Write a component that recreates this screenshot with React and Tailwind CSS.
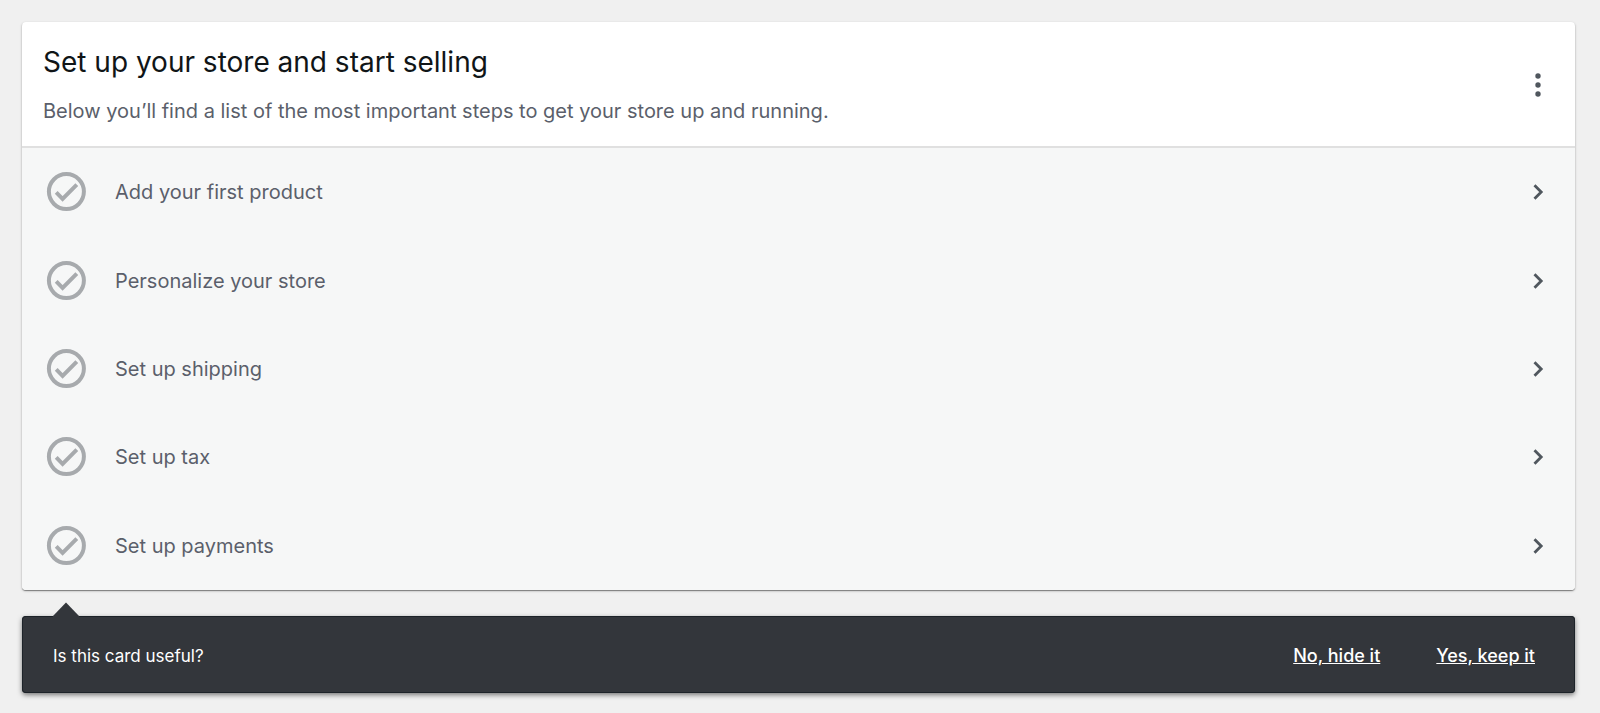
const steps = [
  'Add your first product',
  'Personalize your store',
  'Set up shipping',
  'Set up tax',
  'Set up payments',
];

function CheckCircle() {
  return (
    <svg
      className="size-12 shrink-0 text-[#a7aaad]"
      viewBox="0 0 24 24"
      fill="none"
      stroke="currentColor"
      strokeWidth="2"
      aria-hidden="true"
    >
      <circle cx="11.7" cy="11.8" r="8.75" />
      <path d="M6.6 12.2l3.2 3.2 7.1-7.1" />
    </svg>
  );
}

function ChevronRight() {
  return (
    <svg
      className="h-4 w-3 shrink-0 text-[#50575e]"
      viewBox="0 0 12 16"
      fill="none"
      stroke="currentColor"
      strokeWidth="2.8"
      aria-hidden="true"
    >
      <path d="M2.5 1.2L9.2 8l-6.7 6.8" />
    </svg>
  );
}

function Step({ label }) {
  return (
    <li className="flex">
      <button type="button" className="flex flex-1 items-center pr-[31px] pl-[21px] text-left">
        <CheckCircle />
        <span className="ml-6 flex-1 text-[20px] leading-7 text-[#5b5f6b]">{label}</span>
        <ChevronRight />
      </button>
    </li>
  );
}

export default function App() {
  return (
    <div className="min-h-screen bg-[#f0f0f0] pt-[22px] pr-[25px] pb-5 pl-[22px] font-['Inter','Liberation_Sans',sans-serif]">
      <section className="overflow-hidden rounded bg-white shadow-[0_1px_1px_rgba(0,0,0,0.4),0_1px_3px_rgba(0,0,0,0.2)]">
        <header className="flex items-center justify-between border-b-2 border-[#e0e0e0] pt-5 pr-[25px] pb-[19px] pl-[21px]">
          <div>
            <h1 className="text-[28px] leading-10 text-[#101517]">Set up your store and start selling</h1>
            <p className="mt-[13px] text-[20px] leading-8 text-[#5b5f6b]">
              Below you’ll find a list of the most important steps to get your store up and running.
            </p>
          </div>
          <button type="button" aria-label="Task list options" className="flex h-8 w-6 items-center justify-center">
            <svg className="h-6 w-2 text-[#50575e]" viewBox="0 0 8 24" fill="currentColor" aria-hidden="true">
              <circle cx="4" cy="3" r="2.7" />
              <circle cx="4" cy="12" r="2.7" />
              <circle cx="4" cy="21" r="2.7" />
            </svg>
          </button>
        </header>
        <ul className="grid min-h-[442px] auto-rows-fr bg-[#f6f7f7]">
          {steps.map((label) => (
            <Step key={label} label={label} />
          ))}
        </ul>
      </section>

      <section className="mt-3">
        <svg className="relative -mb-px ml-[31px] block h-[15px] w-[26px] text-[#33363b]" viewBox="0 0 26 15" fill="currentColor" aria-hidden="true">
          <path d="M13 0.5L26 14v1H0v-1z" />
        </svg>
        <div className="flex items-center rounded bg-[#33363b] pt-[25px] pr-10 pb-[22px] pl-[31px] text-white shadow-[0_2px_5px_rgba(0,0,0,0.5)] ring-1 ring-[#1d2329] ring-inset">
          <p className="flex-1 text-[17px] leading-[30px]">Is this card useful?</p>
          <div className="flex gap-14 text-[18px] leading-[30px] font-medium">
            <button type="button" className="underline">No, hide it</button>
            <button type="button" className="underline">Yes, keep it</button>
          </div>
        </div>
      </section>
    </div>
  );
}
